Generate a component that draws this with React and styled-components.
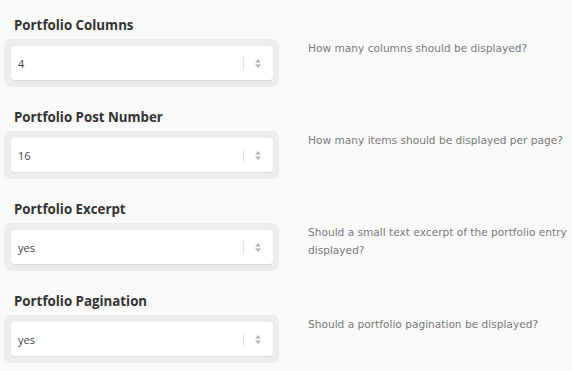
import styled, { createGlobalStyle } from 'styled-components';

const GlobalStyle = createGlobalStyle`
  html, body {
    margin: 0;
    padding: 0;
    background: #f9f9f9;
  }
`

const Page = styled.div`
  width: 572px;
  height: 371px;
  overflow: hidden;
  padding-left: 4px;
  box-sizing: border-box;
`

const Row = styled.div`
  display: grid;
  grid-template-columns: 275px 1fr;
  grid-template-rows: auto auto;
  column-gap: 29px;
  padding: 16px 0 5px;
`

const Title = styled.h3`
  grid-column: 1 / 3;
  margin: 0 0 5px 10px;
  font-family: "Open Sans", sans-serif;
  font-weight: 700;
  font-size: 13.3px;
  line-height: 18px;
  color: #333;
`

const Field = styled.div`
  background: #ececec;
  border-radius: 7px;
  padding: 7px 6px 7px 7px;
`

const Select = styled.div`
  height: 34px;
  box-sizing: border-box;
  background: #fff;
  border-radius: 4px;
  box-shadow: 0 1px 1px rgba(0, 0, 0, 0.08);
  display: flex;
  align-items: center;
  padding: 0 12px 0 7px;
  font-family: "Open Sans", sans-serif;
  font-size: 11px;
  color: #444;
`

const Value = styled.span`
  flex: 1;
`

const Divider = styled.span`
  width: 1px;
  height: 13px;
  background: #e2e2e2;
  margin-right: 11px;
`

const Desc = styled.p`
  margin: 0;
  padding-right: 2px;
  font-family: "DejaVu Sans", sans-serif;
  font-size: 10.6px;
  line-height: 18px;
  color: #7a7a7a;
`

function Arrows() {
  return (
    <svg width="6" height="9" viewBox="0 0 6 9">
      <path d="M3 0 L6 3.5 L0 3.5 Z" fill="#b0b0b0" />
      <path d="M3 9 L6 5.5 L0 5.5 Z" fill="#b0b0b0" />
    </svg>
  )
}

const options = [
  { title: 'Portfolio Columns', value: '4', desc: 'How many columns should be displayed?' },
  { title: 'Portfolio Post Number', value: '16', desc: 'How many items should be displayed per page?' },
  { title: 'Portfolio Excerpt', value: 'yes', desc: 'Should a small text excerpt of the portfolio entry displayed?' },
  { title: 'Portfolio Pagination', value: 'yes', desc: 'Should a portfolio pagination be displayed?' },
];

export default function App() {
  return (
    <>
      <GlobalStyle />
      <Page>
        {options.map((opt) => (
          <Row key={opt.title}>
            <Title>{opt.title}</Title>
            <Field>
              <Select>
                <Value>{opt.value}</Value>
                <Divider />
                <Arrows />
              </Select>
            </Field>
            <Desc>{opt.desc}</Desc>
          </Row>
        ))}
      </Page>
    </>
  )
}
